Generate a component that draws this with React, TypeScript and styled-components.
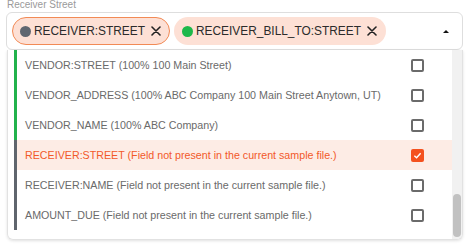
import styled, { createGlobalStyle } from 'styled-components'

const Global = createGlobalStyle`
  body {
    margin: 0;
    background: #fff;
    font-family: "Liberation Sans", Arial, sans-serif;
  }
`

const Wrap = styled.div`
  width: 474px;
  height: 245px;
  padding: 0 0 0 6px;
  box-sizing: border-box;
`

const Label = styled.div`
  font-size: 10px;
  color: #9a9a9a;
  height: 12px;
  line-height: 10px;
  padding-left: 1px;
`

const Field = styled.div`
  width: 457px;
  height: 38px;
  box-sizing: border-box;
  border: 1px solid #dedede;
  border-radius: 6px;
  display: flex;
  align-items: center;
  padding: 0 0 0 5px;
  gap: 4px;
`

const Chip = styled.div<{ $active?: boolean }>`
  display: flex;
  align-items: center;
  height: 28px;
  box-sizing: border-box;
  padding: 0 8px 0 7px;
  border-radius: 14px;
  background: #fde0d5;
  border: 1.5px solid ${p => (p.$active ? '#f28a55' : 'transparent')};
  font-size: 11.9px;
  color: #2b2b2b;
  gap: 3px;
`

const Dot = styled.span<{ $color: string }>`
  width: 11px;
  height: 11px;
  border-radius: 50%;
  background: ${p => p.$color};
`

const Close = styled.svg`
  width: 10px;
  height: 10px;
  margin-left: 3px;
`

const Caret = styled.span`
  margin-left: auto;
  margin-right: 13px;
  width: 0;
  height: 0;
  border-left: 3px solid transparent;
  border-right: 3px solid transparent;
  border-bottom: 3px solid #111;
`

const Menu = styled.div`
  margin-left: 1px;
  width: 456px;
  height: 190px;
  box-sizing: border-box;
  border: 1px solid #e2e2e2;
  border-top: none;
  border-radius: 0 0 6px 6px;
  box-shadow: 0 1px 3px rgba(0, 0, 0, 0.12);
  display: flex;
  overflow: hidden;
`

const List = styled.div`
  flex: 1;
  padding-left: 6px;
`

const Row = styled.div<{ $bar: string; $selected?: boolean }>`
  height: 30px;
  display: flex;
  align-items: center;
  border-left: 3px solid ${p => p.$bar};
  background: ${p => (p.$selected ? '#fdece5' : 'transparent')};
  color: ${p => (p.$selected ? '#f2592a' : '#6a6a6a')};
  font-size: 10.7px;
  padding-left: 8px;
  padding-right: 28px;
`

const Text = styled.span`
  flex: 1;
  white-space: nowrap;
`

const Box = styled.span<{ $checked?: boolean }>`
  width: 13px;
  height: 13px;
  box-sizing: border-box;
  border-radius: 2px;
  border: ${p => (p.$checked ? 'none' : '2px solid #6b6b6b')};
  background: ${p => (p.$checked ? '#f4511e' : '#fff')};
  display: flex;
  align-items: center;
  justify-content: center;
`

const Track = styled.div`
  width: 8px;
  background: #f1f1f1;
  display: flex;
  flex-direction: column;
  justify-content: flex-end;
  padding: 0 1px 2px;
`

const Thumb = styled.div`
  height: 43px;
  border-radius: 4px;
  background: #c1c1c1;
`

const rows = [
  { text: 'VENDOR:STREET (100% 100 Main Street)', bar: '#22b24c' },
  { text: 'VENDOR_ADDRESS (100% ABC Company 100 Main Street Anytown, UT)', bar: '#22b24c' },
  { text: 'VENDOR_NAME (100% ABC Company)', bar: '#22b24c' },
  { text: 'RECEIVER:STREET (Field not present in the current sample file.)', bar: '#5f656d', selected: true },
  { text: 'RECEIVER:NAME (Field not present in the current sample file.)', bar: '#5f656d' },
  { text: 'AMOUNT_DUE (Field not present in the current sample file.)', bar: '#5f656d' },
]

const X = () => (
  <Close viewBox="0 0 10 10">
    <path d="M1 1L9 9M9 1L1 9" stroke="#222" strokeWidth="1.6" strokeLinecap="round" />
  </Close>
)

export default function App() {
  return (
    <Wrap>
      <Global />
      <Label>Receiver Street</Label>
      <Field>
        <Chip $active>
          <Dot $color="#5f6670" />
          RECEIVER:STREET
          <X />
        </Chip>
        <Chip>
          <Dot $color="#1cb84a" />
          RECEIVER_BILL_TO:STREET
          <X />
        </Chip>
        <Caret />
      </Field>
      <Menu>
        <List>
          {rows.map((r, i) => (
            <Row key={i} $bar={r.bar} $selected={r.selected}>
              <Text>{r.text}</Text>
              <Box $checked={r.selected}>
                {r.selected && (
                  <svg width="9" height="9" viewBox="0 0 10 10">
                    <path d="M1.5 5.2L4 7.5L8.5 2.5" stroke="#fff" strokeWidth="1.6" fill="none" />
                  </svg>
                )}
              </Box>
            </Row>
          ))}
        </List>
        <Track>
          <Thumb />
        </Track>
      </Menu>
    </Wrap>
  )
}
